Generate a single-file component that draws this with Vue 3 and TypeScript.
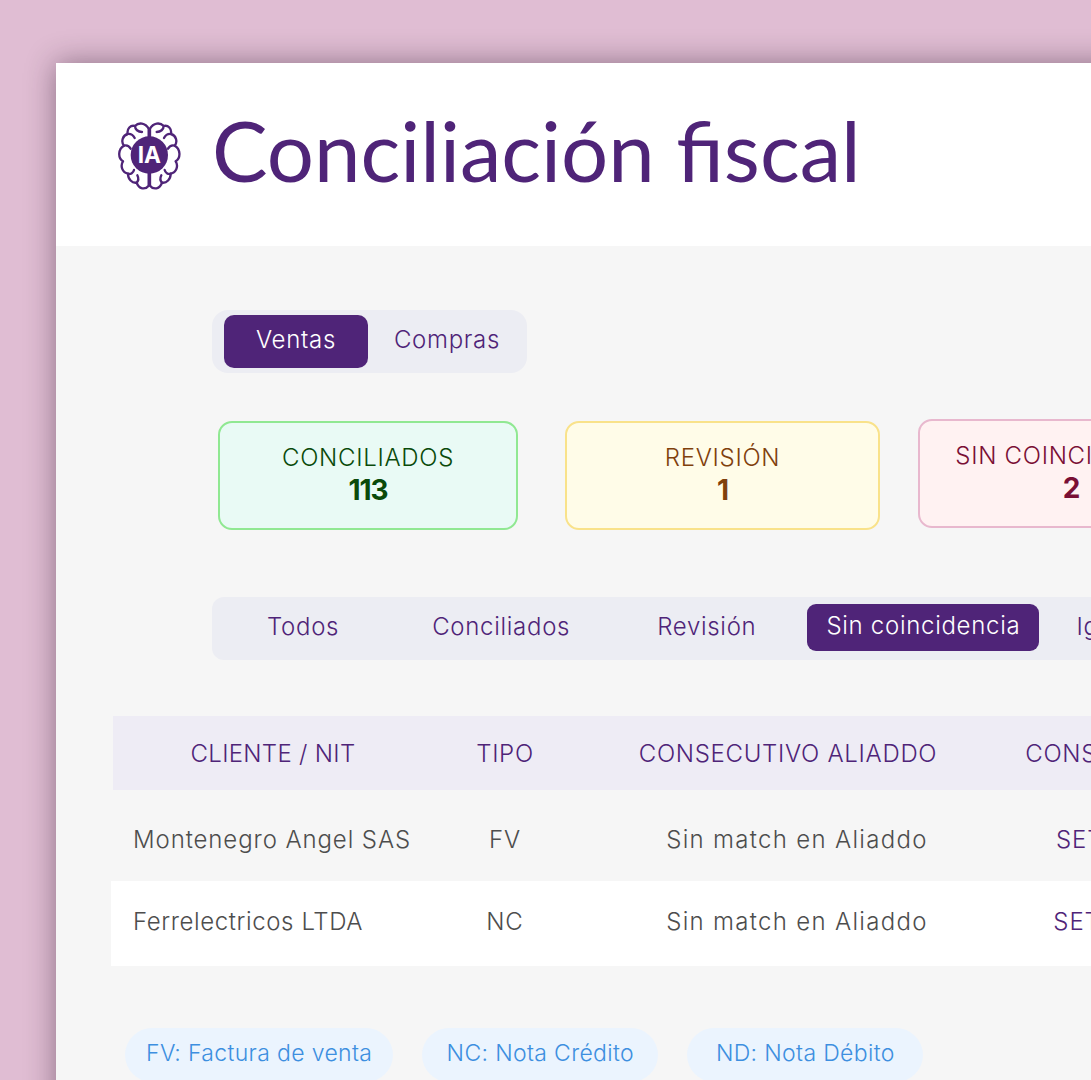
<script setup lang="ts">
const stats = [
  { key: 'ok', label: 'CONCILIADOS', value: '113' },
  { key: 'warn', label: 'REVISIÓN', value: '1' },
  { key: 'bad', label: 'SIN COINCIDENCIA', value: '2' },
]
const filters = [
  { label: 'Todos', cls: 'f-todos' },
  { label: 'Conciliados', cls: 'f-conc' },
  { label: 'Revisión', cls: 'f-rev' },
  { label: 'Sin coincidencia', cls: 'f-sin active' },
  { label: 'Igualados', cls: 'f-ig' },
]
const rows = [
  { client: 'Montenegro Angel SAS', type: 'FV', aliaddo: 'Sin match en Aliaddo', dian: 'SETP99000088', cls: 'row-a' },
  { client: 'Ferrelectricos LTDA', type: 'NC', aliaddo: 'Sin match en Aliaddo', dian: 'SETP990001134', cls: 'row-b' },
]
const chips = ['FV: Factura de venta', 'NC: Nota Crédito', 'ND: Nota Débito']
</script>

<template>
  <div class="page">
    <main class="card">
      <header class="head">
        <svg class="brain" viewBox="54 66 192 204" aria-hidden="true">
          <g class="lobes">
            <g>
              <path d="M146 86C136 68 116 66 105 78C92 74 80 86 83 102C68 106 62 125 72 137C54 147 53 174 69 184C60 198 67 218 84 221C84 238 96 250 110 248C116 268 136 270 146 257Z" />
              <path d="M83 102C92 101 100 106 104 114M105 78C105 88 114 96 126 96M72 137C80 135 88 139 92 146M84 221C92 224 100 218 102 210M110 248C116 242 116 234 112 226" />
            </g>
            <g transform="translate(296 0) scale(-1 1)">
              <path d="M146 86C136 68 116 66 105 78C92 74 80 86 83 102C68 106 62 125 72 137C54 147 53 174 69 184C60 198 67 218 84 221C84 238 96 250 110 248C116 268 136 270 146 257Z" />
              <path d="M83 102C92 101 100 106 104 114M105 78C105 88 114 96 126 96M72 137C80 135 88 139 92 146M84 221C92 224 100 218 102 210M110 248C116 242 116 234 112 226" />
            </g>
          </g>
          <circle cx="148" cy="165" r="56" class="core" />
          <text x="148" y="190" text-anchor="middle" class="ia">IA</text>
        </svg>
        <h1 class="title">Conciliación fiscal</h1>
      </header>

      <section class="content">
        <div class="segment">
          <span class="seg-btn seg-active">Ventas</span>
          <span class="seg-btn">Compras</span>
        </div>

        <div class="stats">
          <div v-for="s in stats" :key="s.key" class="stat" :class="s.key">
            <span class="stat-label">{{ s.label }}</span>
            <strong class="stat-value">{{ s.value }}</strong>
          </div>
        </div>

        <nav class="filters">
          <span v-for="f in filters" :key="f.label" class="filter" :class="f.cls">{{ f.label }}</span>
        </nav>

        <div class="table">
          <div class="tr thead">
            <span class="th-client">CLIENTE / NIT</span>
            <span>TIPO</span>
            <span>CONSECUTIVO ALIADDO</span>
            <span class="th-dian">CONSECUTIVO DIAN</span>
          </div>
          <div v-for="r in rows" :key="r.client" class="tr body-row" :class="r.cls">
            <span class="td-client">{{ r.client }}</span>
            <span class="td-type">{{ r.type }}</span>
            <span class="td-aliaddo">{{ r.aliaddo }}</span>
            <span class="td-dian">{{ r.dian }}</span>
          </div>
        </div>

        <div class="chips">
          <span v-for="c in chips" :key="c" class="chip">{{ c }}</span>
        </div>
      </section>
    </main>
  </div>
</template>

<style>
html, body { margin: 0; background: #e0bdd3; overflow: hidden; }
</style>

<style scoped>
.page {
  width: 1091px;
  height: 1080px;
  overflow: hidden;
  padding: 63px 0 0 56px;
  box-sizing: border-box;
  background: #e0bdd3;
  font-family: "Inter", "Liberation Sans", sans-serif;
  font-weight: 300;
  letter-spacing: 0.7px;
  font-size: 24px;
}
.card {
  width: 1300px;
  min-height: 1100px;
  background: #f6f6f6;
  box-shadow: 0 0 28px rgba(40, 20, 40, 0.45);
}
.head {
  height: 183px;
  background: #fff;
  display: flex;
  align-items: center;
  padding-left: 62px;
  box-sizing: border-box;
}
.brain { width: 64px; height: 68px; margin-top: 3px; }
.lobes path { fill: #fff; stroke: #4f2478; stroke-width: 7; stroke-linejoin: round; stroke-linecap: round; }
.core { fill: #4f2478; }
.ia { fill: #fff; font: 700 68px "Inter", sans-serif; letter-spacing: 0; }
.title {
  margin: 0 0 0 30px;
  font: 400 83.3px/1 "Lato", sans-serif;
  letter-spacing: normal;
  color: #4f2478;
  position: relative;
  top: -4px;
}
.content { padding: 64px 0 0 156px; }
.segment {
  width: 315px;
  height: 63px;
  box-sizing: border-box;
  padding: 5px 0 5px 12px;
  display: flex;
  background: #ecedf3;
  border-radius: 16px;
}
.seg-btn {
  width: 144px;
  display: flex;
  align-items: center;
  justify-content: center;
  color: #4f2478;
  border-radius: 10px;
  padding-bottom: 4px;
  box-sizing: border-box;
}
.seg-active { background: #4f2478; color: #fff; margin-right: 7px; padding-bottom: 5px; }
.stats { display: flex; align-items: flex-start; margin: 48px 0 0 6px; }
.stat {
  height: 109px;
  box-sizing: border-box;
  border: 2px solid;
  border-radius: 14px;
  display: flex;
  flex-direction: column;
  align-items: center;
  justify-content: center;
  padding-bottom: 1px;
}
.stat-label { line-height: 30px; }
.stat-value { font-size: 28px; line-height: 34px; font-weight: 700; letter-spacing: -1px; }
.ok { width: 300px; background: #e9faf5; border-color: #90e892; color: #0a4a0a; }
.warn { width: 315px; margin-left: 47px; background: #fffce8; border-color: #f9e28a; color: #80400c; }
.bad { width: 306px; margin: -2px 0 0 38px; background: #fff2f2; border-color: #e8b8ce; color: #7a0f35; }
.filters {
  width: 1000px;
  height: 63px;
  margin-top: 67px;
  background: #ecedf3;
  border-radius: 12px;
  display: flex;
  align-items: center;
}
.filter { color: #4f2478; padding-bottom: 4px; white-space: nowrap; }
.f-todos { margin-left: 55px; }
.f-conc { margin-left: 93px; }
.f-rev { margin-left: 87px; }
.f-sin { margin-left: 51px; }
.f-ig { margin-left: 37px; }
.active {
  background: #4f2478;
  color: #fff;
  border-radius: 9px;
  width: 232px;
  height: 47px;
  display: flex;
  align-items: center;
  justify-content: center;
  box-sizing: border-box;
  margin-bottom: 2px;
}
.table { margin: 56px 0 0 -99px; }
.tr { display: grid; grid-template-columns: 320px 144px 422px 302px; align-items: center; white-space: nowrap; }
.thead { height: 74px; background: #eeecf5; color: #4f2478; text-align: center; }
.th-client { letter-spacing: 0.3px; }
.body-row { color: #4d4d4d; text-align: center; box-sizing: border-box; letter-spacing: 0.9px; }
.row-a { height: 91px; padding-top: 8px; }
.row-b { height: 85px; background: #fff; margin-left: -2px; padding: 0 0 4px 2px; }
.td-client { text-align: left; padding-left: 20px; }
.row-b .td-client { letter-spacing: 0.6px; }
.td-aliaddo { padding-left: 18px; letter-spacing: 1.3px; }
.td-dian { color: #4f2478; }
.chips { display: flex; gap: 29px; margin: 62px 0 0 -87px; }
.chip {
  height: 54px;
  min-width: 236px;
  display: flex;
  align-items: center;
  justify-content: center;
  padding: 0 21px 4px;
  box-sizing: border-box;
  border-radius: 27px;
  background: #ebf4fe;
  color: #3d8fe0;
  font-size: 23px;
  letter-spacing: 0.35px;
}
</style>
